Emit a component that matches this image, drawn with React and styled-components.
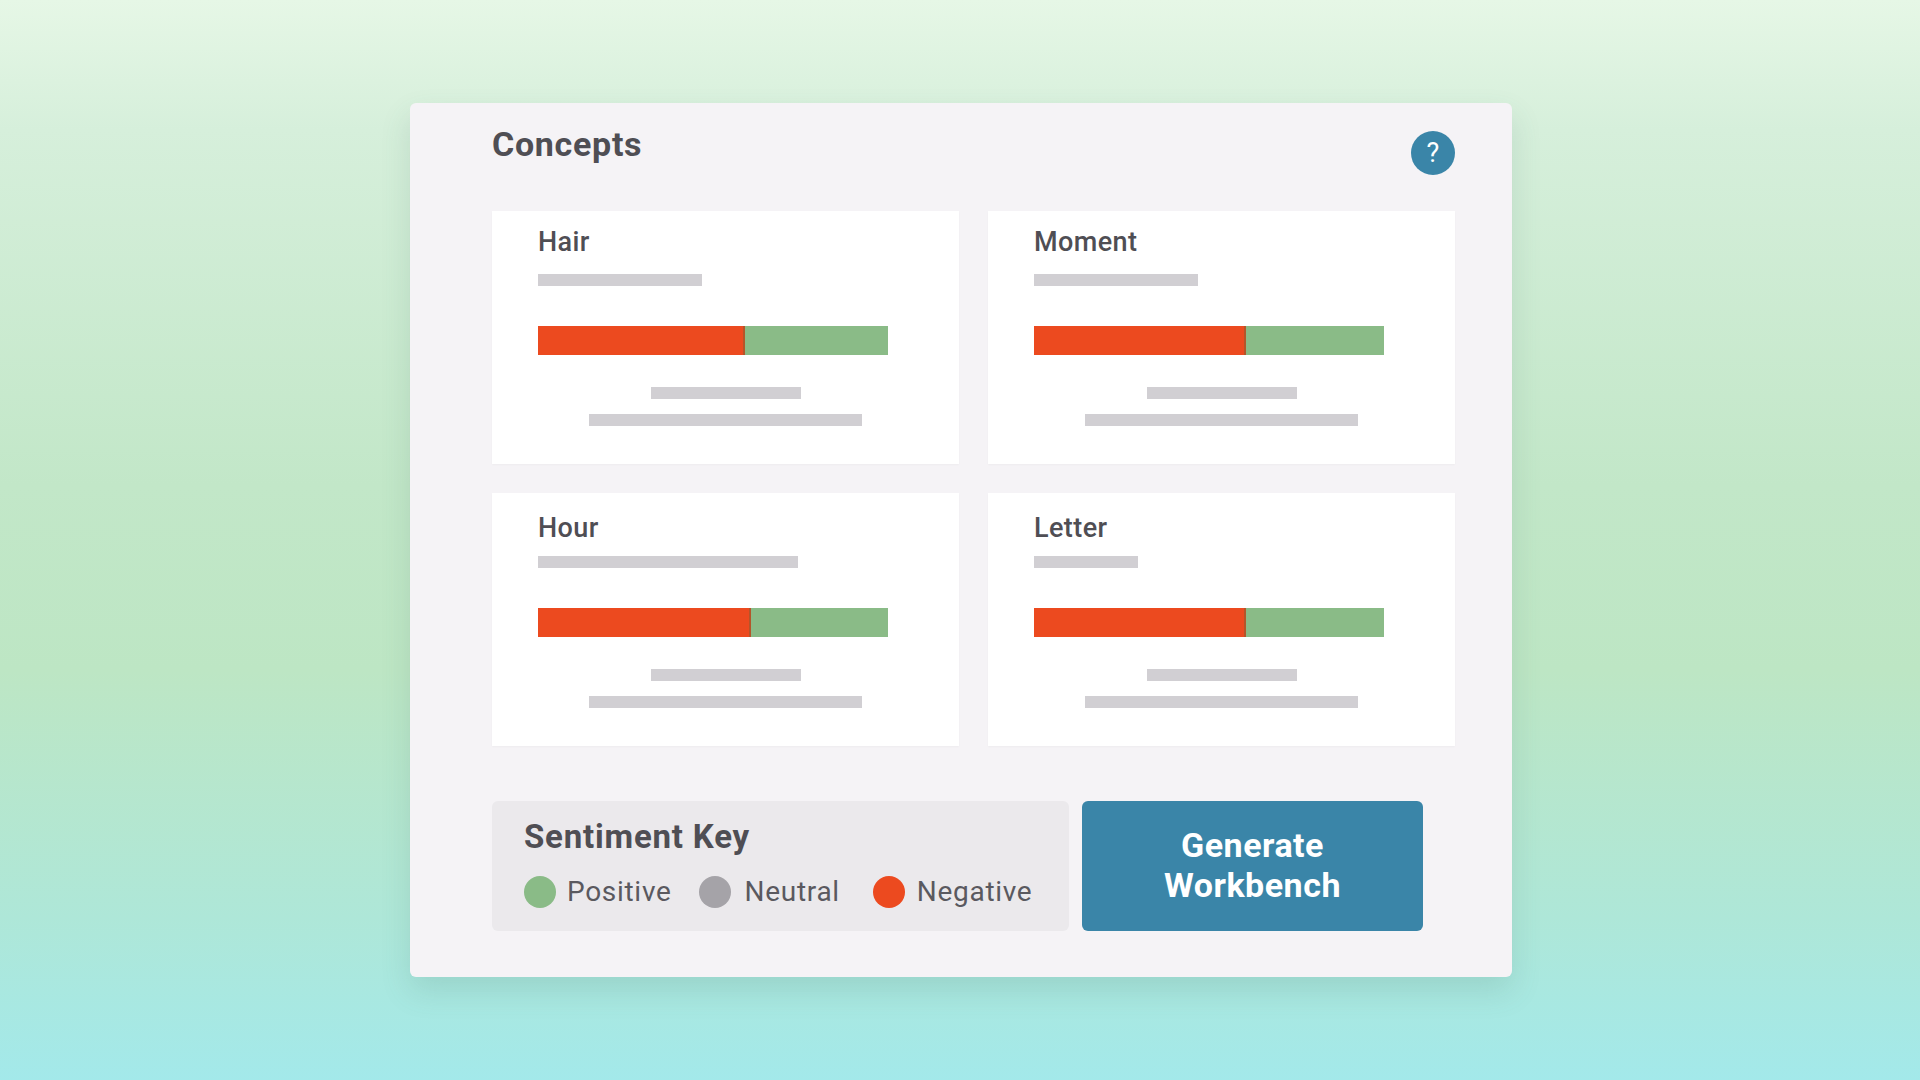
import React from 'react';
import styled, { createGlobalStyle } from 'styled-components';

const GlobalStyle = createGlobalStyle`
  html, body {
    margin: 0;
    padding: 0;
  }
  body {
    font-family: Roboto, "Liberation Sans", sans-serif;
  }
`;

const Page = styled.div`
  width: 1920px;
  height: 1080px;
  box-sizing: border-box;
  padding: 103px 0 0 410px;
  overflow: hidden;
  background: linear-gradient(180deg, #e6f7e6 0%, #d6efdb 12%, #c2e7c8 45%, #bde6c4 62%, #aee7d8 85%, #a3e9ea 100%);
`;

const Panel = styled.div`
  width: 1102px;
  height: 874px;
  box-sizing: border-box;
  padding-left: 82px;
  background: #f5f3f6;
  border-radius: 6px;
  box-shadow: 0 14px 30px rgba(70, 110, 100, 0.16);
`;

const Header = styled.div`
  width: 963px;
  height: 108px;
  display: flex;
  justify-content: space-between;
  align-items: flex-start;
`;

const Title = styled.h1`
  margin: 19px 0 0;
  font-size: 34px;
  line-height: 44px;
  font-weight: 700;
  letter-spacing: 0.7px;
  color: #4f4e54;
`;

const HelpButton = styled.div`
  width: 44px;
  height: 44px;
  margin-top: 28px;
  border-radius: 50%;
  background: #3a85a8;
  color: #fff;
  display: flex;
  align-items: center;
  justify-content: center;
  font-size: 27px;
  font-weight: 400;
`;

const Grid = styled.div`
  display: grid;
  grid-template-columns: 467px 467px;
  grid-auto-rows: 253px;
  gap: 29px;
`;

const Card = styled.div`
  box-sizing: border-box;
  padding: 0 46px;
  background: #fff;
  display: flex;
  flex-direction: column;
  box-shadow: 0 1px 2px rgba(0, 0, 0, 0.03);
`;

const CardHead = styled.div`
  height: 63px;
  box-sizing: border-box;
  padding-top: ${(p) => p.$drop}px;
`;

const CardTitle = styled.div`
  font-size: 27px;
  line-height: 30px;
  font-weight: 500;
  letter-spacing: 0.4px;
  color: #4f4e54;
`;

const Placeholder = styled.div`
  flex: none;
  height: 12px;
  background: #d1cfd3;
`;

const SentimentBar = styled.div`
  display: flex;
  width: 350px;
  height: 29px;
  margin-top: 40px;
  background: #8abb87;
`;

const NegativePart = styled.div`
  height: 100%;
  background: #ec4a1f;
  border-right: 2px solid #b4552a;
  box-sizing: border-box;
`;

const Caption = styled.div`
  display: flex;
  flex-direction: column;
  align-items: center;
  gap: 15px;
  margin-top: 32px;
`;

const Footer = styled.div`
  display: flex;
  gap: 13px;
  margin-top: 55px;
  height: 130px;
`;

const KeyBox = styled.div`
  width: 577px;
  box-sizing: border-box;
  padding: 14px 0 0 32px;
  background: #ebe9ec;
  border-radius: 6px;
`;

const KeyTitle = styled.div`
  font-size: 33px;
  line-height: 44px;
  font-weight: 700;
  letter-spacing: 0.8px;
  color: #4f4e54;
`;

const Legend = styled.div`
  display: flex;
  align-items: center;
  margin-top: 15px;
`;

const LegendItem = styled.div`
  display: flex;
  align-items: center;
  margin-right: ${(p) => p.$gap}px;
`;

const Dot = styled.span`
  width: 32px;
  height: 32px;
  border-radius: 50%;
  background: ${(p) => p.$color};
`;

const LegendLabel = styled.span`
  margin-left: ${(p) => p.$offset}px;
  font-size: 28px;
  line-height: 36px;
  letter-spacing: 0.7px;
  color: #5a595f;
`;

const GenerateButton = styled.div`
  width: 341px;
  box-sizing: border-box;
  padding-bottom: 2px;
  display: flex;
  align-items: center;
  justify-content: center;
  text-align: center;
  background: #3a85a8;
  border-radius: 6px;
  color: #fff;
  font-size: 34px;
  line-height: 40px;
  font-weight: 700;
  letter-spacing: 0.5px;
`;

const concepts = [
  { name: 'Hair', drop: 16, negative: 207, head: 164 },
  { name: 'Moment', drop: 16, negative: 212, head: 164 },
  { name: 'Hour', drop: 20, negative: 213, head: 260 },
  { name: 'Letter', drop: 20, negative: 212, head: 104 },
];

const legend = [
  { label: 'Positive', color: '#8abb87', gap: 27, offset: 11 },
  { label: 'Neutral', color: '#a5a3a8', gap: 33, offset: 14 },
  { label: 'Negative', color: '#ec4a1f', gap: 0, offset: 12 },
];

export default function App() {
  return (
    <Page>
      <GlobalStyle />
      <Panel>
        <Header>
          <Title>Concepts</Title>
          <HelpButton>?</HelpButton>
        </Header>
        <Grid>
          {concepts.map((c) => (
            <Card key={c.name}>
              <CardHead $drop={c.drop}>
                <CardTitle>{c.name}</CardTitle>
              </CardHead>
              <Placeholder style={{ width: c.head }} />
              <SentimentBar>
                <NegativePart style={{ width: c.negative }} />
              </SentimentBar>
              <Caption>
                <Placeholder style={{ width: 150 }} />
                <Placeholder style={{ width: 273 }} />
              </Caption>
            </Card>
          ))}
        </Grid>
        <Footer>
          <KeyBox>
            <KeyTitle>Sentiment Key</KeyTitle>
            <Legend>
              {legend.map((l) => (
                <LegendItem key={l.label} $gap={l.gap}>
                  <Dot $color={l.color} />
                  <LegendLabel $offset={l.offset}>{l.label}</LegendLabel>
                </LegendItem>
              ))}
            </Legend>
          </KeyBox>
          <GenerateButton>
            Generate
            <br />
            Workbench
          </GenerateButton>
        </Footer>
      </Panel>
    </Page>
  );
}
